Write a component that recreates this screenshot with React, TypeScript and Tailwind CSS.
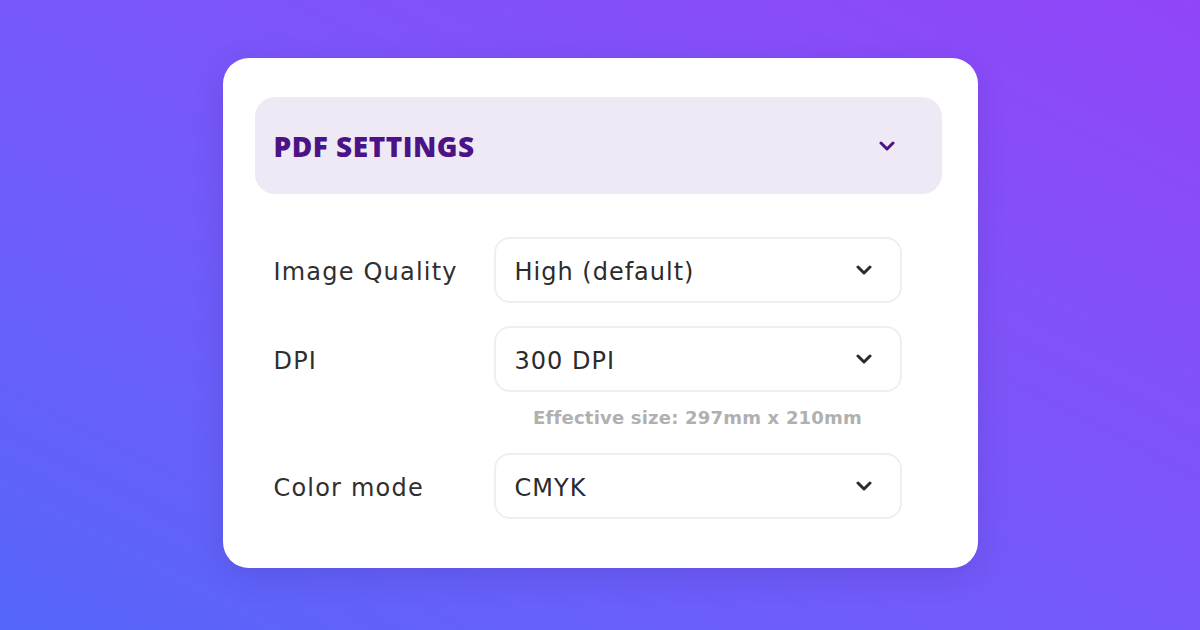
import React from "react";

const font = { fontFamily: '"DejaVu Sans", "Open Sans", sans-serif' };

const Chevron = ({ className }: { className?: string }) => (
  <svg className={className} viewBox="0 0 16 10" fill="none">
    <path
      d="M2 2L8 8L14 2"
      stroke="currentColor"
      strokeWidth="3"
      strokeLinecap="round"
      strokeLinejoin="round"
    />
  </svg>
);

type RowProps = { label: string; value: string };

const SelectRow = ({ label, value }: RowProps) => (
  <div className="flex items-center">
    <div className="w-[220px] pt-[3px] text-[24px] tracking-[1.2px] text-[#2f2f2f]">{label}</div>
    <div className="flex h-[66px] w-[408px] items-center justify-between rounded-[16px] border-2 border-[#efefef] bg-white pl-[19px] pr-[28px]">
      <span className="pt-[3px] text-[24px] tracking-[1px] text-[#2b2b2b]">{value}</span>
      <Chevron className="h-[10px] w-[16px] text-[#2b2b2b]" />
    </div>
  </div>
);

export default function App() {
  return (
    <div
      className="flex h-[630px] w-[1200px] items-center justify-center bg-gradient-to-tr from-[#5566fa] to-[#9145f8]"
      style={font}
    >
      <div className="mb-[4px] flex h-[510px] w-[755px] flex-col rounded-[26px] bg-white pl-[32px] pr-[36px] pt-[39px] shadow-[0_8px_30px_rgba(40,20,120,0.15)]">
        {/* Header */}
        <div className="flex h-[97px] items-center justify-between rounded-[20px] bg-[#efe9f5] pl-[19px] pr-[47px]">
          <h2
            className="text-[28px] font-extrabold tracking-[0.5px] text-[#4b1385]"
            style={{ fontFamily: '"Open Sans", sans-serif' }}
          >
            PDF SETTINGS
          </h2>
          <Chevron className="h-[10px] w-[16px] text-[#4b1385]" />
        </div>

        {/* Fields */}
        <div className="mt-[43px] flex flex-col pl-[19px]">
          <SelectRow label="Image Quality" value="High (default)" />
          <div className="mt-[23px]">
            <SelectRow label="DPI" value="300 DPI" />
          </div>
          <div className="ml-[220px] mt-[13px] w-[408px] text-center text-[18px] font-bold leading-[26px] tracking-[0.2px] text-[#b0b0b0]">
            Effective size: 297mm x 210mm
          </div>
          <div className="mt-[22px]">
            <SelectRow label="Color mode" value="CMYK" />
          </div>
        </div>
      </div>
    </div>
  );
}
